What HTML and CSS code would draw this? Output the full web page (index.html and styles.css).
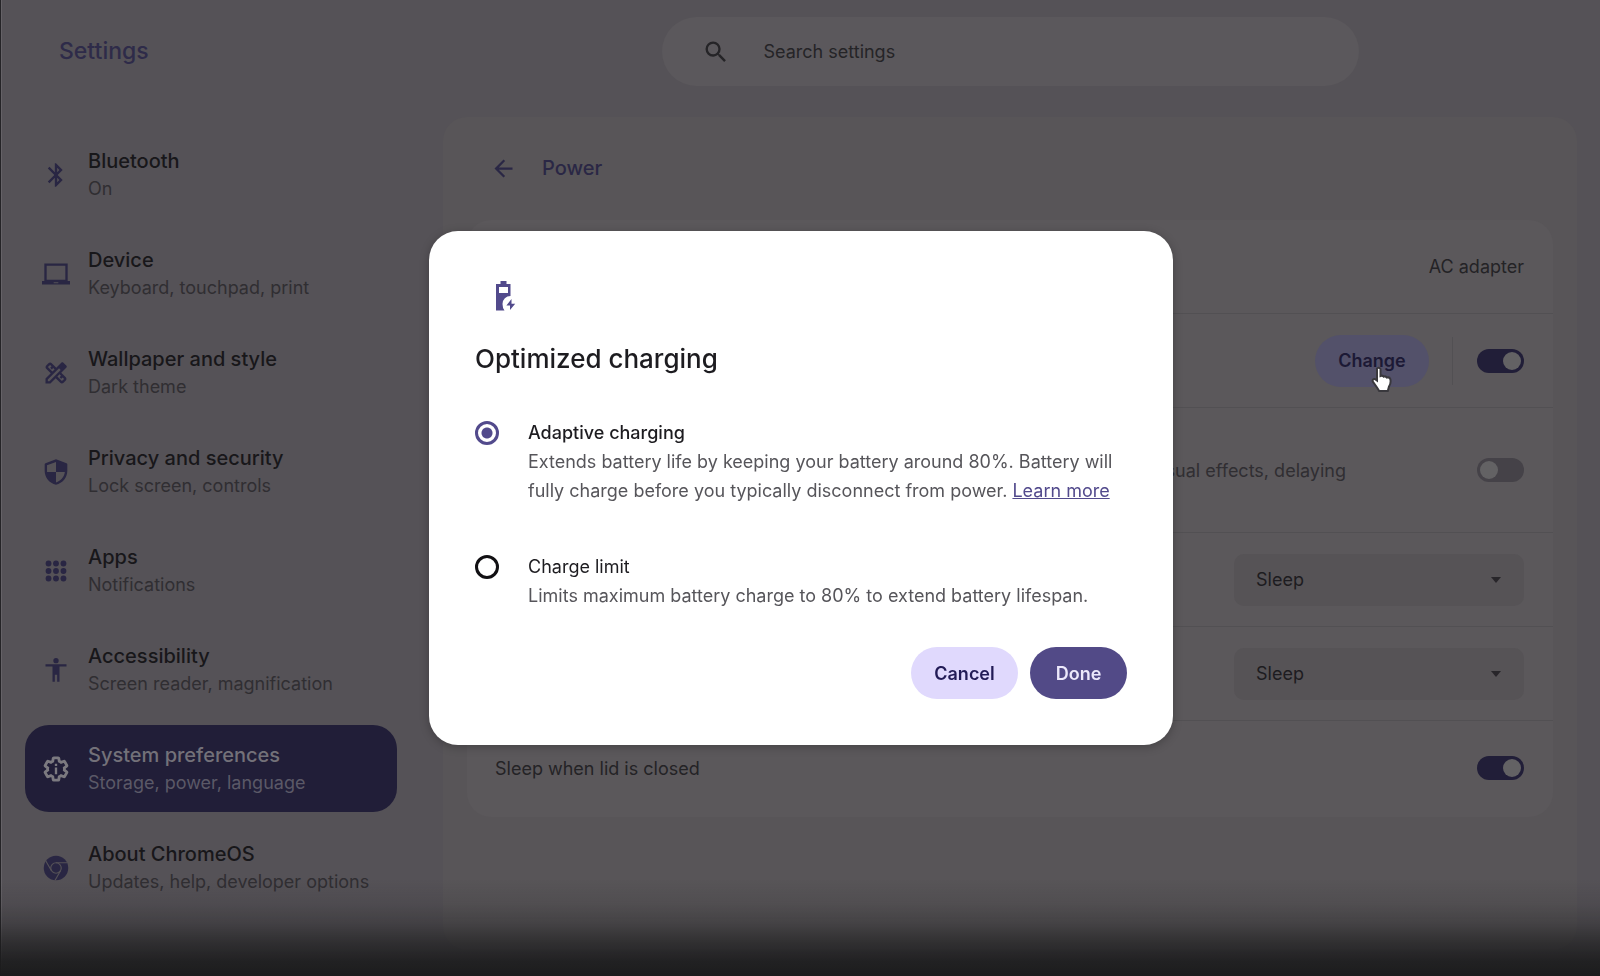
FILE: index.html
```
<!DOCTYPE html>
<html lang="en">
<head>
    <meta charset="UTF-8">
    <meta name="viewport" content="width=device-width, initial-scale=1.0">
    <title>Settings - Power</title>
    <link rel="stylesheet" href="styles.css">
</head>
<body>
    <header class="top-bar">
        <h1>Settings</h1>
        <label class="search">
            <svg viewBox="0 0 24 24"><path d="M15.5 14h-.79l-.28-.27A6.47 6.47 0 0 0 16 9.5 6.5 6.5 0 1 0 9.5 16c1.61 0 3.09-.59 4.23-1.57l.27.28v.79l5 4.99L20.49 19l-4.99-5zm-6 0a4.5 4.5 0 1 1 0-9 4.5 4.5 0 0 1 0 9z"/></svg>
            <input type="text" placeholder="Search settings" aria-label="Search settings">
        </label>
    </header>

    <div class="layout">
        <nav class="menu">
            <a href="#" class="menu-item">
                <svg viewBox="0 0 24 24"><path d="M17.71 7.71L12 2h-1v7.59L6.41 5 5 6.41 10.59 12 5 17.59 6.41 19 11 14.41V22h1l5.71-5.71-4.3-4.29 4.3-4.29zM13 5.83l1.88 1.88L13 9.59V5.83zm1.88 10.46L13 18.17v-3.76l1.88 1.88z"/></svg>
                <span><b>Bluetooth</b><small>On</small></span>
            </a>
            <a href="#" class="menu-item">
                <svg viewBox="0 0 24 24"><path fill-rule="evenodd" d="M2 3h20v15h2v3H0v-3h2zM4 5v12h16V5zM10 19v1h4v-1z"/></svg>
                <span><b>Device</b><small>Keyboard, touchpad, print</small></span>
            </a>
            <a href="#" class="menu-item">
                <svg viewBox="0 0 24 24"><path fill-rule="evenodd" d="M20.97 7.27c.39-.39.39-1.02 0-1.41l-2.83-2.83c-.39-.39-1.02-.39-1.41 0l-4.49 4.49-3.89-3.89c-.78-.78-2.05-.78-2.83 0l-1.9 1.9c-.78.78-.78 2.05 0 2.83l3.89 3.89L3 16.76V21h4.24l4.52-4.52 3.89 3.89c.95.95 2.23.6 2.83 0l1.9-1.9c.78-.78.78-2.05 0-2.83l-3.89-3.89 4.48-4.48zM5.04 6.94l1.89-1.9L8.2 6.31 7.02 7.5l1.41 1.41 1.19-1.19 1.2 1.2-1.9 1.9-3.88-3.88zM17.06 18.96l-3.89-3.89 1.9-1.9 1.2 1.21-1.19 1.19 1.41 1.41 1.19-1.19 1.27 1.27-1.89 1.9zM6.41 19H5v-1.41l9.61-9.61 1.41 1.41L6.41 19z"/></svg>
                <span><b>Wallpaper and style</b><small>Dark theme</small></span>
            </a>
            <a href="#" class="menu-item">
                <svg viewBox="0 0 24 24"><path fill-rule="evenodd" d="M12 1l-9 3.4q-.7.3-.7 1V11c0 5.6 4 10.7 9.7 12 5.7-1.3 9.7-6.4 9.7-12V5.4q0-.7-.7-1zM12 3.5V12h7.6c-.5 4.1-3.5 7.7-7.6 8.9V12H4.3V6.3z"/></svg>
                <span><b>Privacy and security</b><small>Lock screen, controls</small></span>
            </a>
            <a href="#" class="menu-item">
                <svg viewBox="0 0 24 24"><circle cx="5.6" cy="5.6" r="2.5"/><circle cx="12" cy="5.6" r="2.5"/><circle cx="18.4" cy="5.6" r="2.5"/><circle cx="5.6" cy="12" r="2.5"/><circle cx="12" cy="12" r="2.5"/><circle cx="18.4" cy="12" r="2.5"/><circle cx="5.6" cy="18.4" r="2.5"/><circle cx="12" cy="18.4" r="2.5"/><circle cx="18.4" cy="18.4" r="2.5"/></svg>
                <span><b>Apps</b><small>Notifications</small></span>
            </a>
            <a href="#" class="menu-item">
                <svg viewBox="0 0 24 24"><circle cx="12" cy="4" r="2.3"/><path d="M21 9h-6v13h-2v-6h-2v6H9V9H3V7h18v2z"/></svg>
                <span><b>Accessibility</b><small>Screen reader, magnification</small></span>
            </a>
            <a href="#" class="menu-item selected">
                <svg viewBox="0 0 24 24"><path fill="none" stroke="currentColor" stroke-width="2.4" d="M19.14 12.94c.04-.3.06-.61.06-.94 0-.32-.02-.64-.07-.94l2.03-1.58c.18-.14.23-.41.12-.61l-1.92-3.32c-.12-.22-.37-.29-.59-.22l-2.39.96c-.5-.38-1.03-.7-1.62-.94l-.36-2.54c-.04-.24-.24-.41-.48-.41h-3.84c-.24 0-.43.17-.47.41l-.36 2.54c-.59.24-1.13.57-1.62.94l-2.39-.96c-.22-.08-.47 0-.59.22L2.74 8.87c-.12.21-.08.47.12.61l2.03 1.58c-.05.3-.09.63-.09.94s.02.64.07.94l-2.03 1.58c-.18.14-.23.41-.12.61l1.92 3.32c.12.22.37.29.59.22l2.39-.96c.5.38 1.03.7 1.62.94l.36 2.54c.05.24.24.41.48.41h3.84c.24 0 .44-.17.47-.41l.36-2.54c.59-.24 1.13-.56 1.62-.94l2.39.96c.22.08.47 0 .59-.22l1.92-3.32c.12-.22.07-.47-.12-.61z"/><path d="M11 7.5h2v2h-2zM11 10.8h2v5.7h-2z"/></svg>
                <span><b>System preferences</b><small>Storage, power, language</small></span>
            </a>
            <a href="#" class="menu-item">
                <svg viewBox="0 0 24 24"><circle cx="12" cy="12" r="10.5"/><g class="chrome-lines"><circle cx="12" cy="12" r="4.5"/><path d="M12 7.5h9.5M8.1 14.3L3.3 6M15.9 14.3L11.2 22.5"/></g></svg>
                <span><b>About ChromeOS</b><small>Updates, help, developer options</small></span>
            </a>
        </nav>

        <main class="panel">
            <div class="panel-title">
                <button class="back" aria-label="Back">
                    <svg viewBox="0 0 24 24"><path d="M20 11H7.83l5.59-5.59L12 4l-8 8 8 8 1.41-1.41L7.83 13H20v-2z"/></svg>
                </button>
                <h2>Power</h2>
            </div>
            <div class="card">
                <div class="row"><span class="value">AC adapter</span></div>
                <div class="row">
                    <div class="change-box">
                        <button class="btn change">Change</button>
                        <!-- mouse pointer over the button -->
                        <svg class="pointer" viewBox="0 0 24 28"><path d="M7 2.5q2-1.5 3.5.5v7q2-1 3.2.7 2-.9 3.2.9 2.6-.8 3.4 1.5 1 4-1.3 7.4l-1.2 4.5H9.2L7 21.5l-4.2-6q-.8-2.7 2-2.5l2.2 1.5z"/></svg>
                    </div>
                    <span class="separator"></span>
                    <input type="checkbox" class="toggle" aria-label="Optimized charging" checked>
                </div>
                <div class="row tall">
                    <span class="description">visual effects, delaying</span>
                    <input type="checkbox" class="toggle" aria-label="Battery Saver">
                </div>
                <div class="row">
                    <select aria-label="While charging and idle"><option>Sleep</option></select>
                </div>
                <div class="row">
                    <select aria-label="While on battery and idle"><option>Sleep</option></select>
                </div>
                <div class="row">
                    <label class="row-label" for="lid">Sleep when lid is closed</label>
                    <input type="checkbox" class="toggle" id="lid" checked>
                </div>
            </div>
        </main>
    </div>
    <div class="fade"></div>

    <dialog class="modal" open aria-labelledby="modal-title">
        <svg class="battery" viewBox="0 0 20 30"><path fill-rule="evenodd" d="M4.5 0h6v3h4v12A8 8 0 0 0 6.5 23q0 4 2 6.500H0V3h4.500zM3 6v6h9V6z"/><path d="M15.500 18v4.700h3.700L14 29v-4.600h-3.600z"/></svg>
        <h2 id="modal-title">Optimized charging</h2>
        <form>
            <div class="option">
                <input type="radio" name="charging" id="adaptive" checked>
                <div>
                    <label for="adaptive" class="chosen">Adaptive charging</label>
                    <p>Extends battery life by keeping your battery around 80%. Battery will<br> fully charge before you typically disconnect from power. <a href="#">Learn more</a></p>
                </div>
            </div>
            <div class="option">
                <input type="radio" name="charging" id="limit">
                <div>
                    <label for="limit">Charge limit</label>
                    <p>Limits maximum battery charge to 80% to extend battery lifespan.</p>
                </div>
            </div>
            <div class="actions">
                <button type="button" class="btn cancel">Cancel</button>
                <button type="button" class="btn done">Done</button>
            </div>
        </form>
    </dialog>
</body>
</html>
```
FILE: styles.css
```
* {
    box-sizing: border-box;
}
body {
    margin: 0;
    min-height: 100vh;
    display: flex;
    flex-direction: column;
    background-color: #555257;
    border-left: 1px solid #252427;
    box-shadow: inset 1px 0 #656267;
    font-family: Inter, Roboto, sans-serif;
    font-size: 18px;
    line-height: 29px;
    color: #18171a;
}
h1, h2, p {
    margin: 0;
    font-weight: 500;
}
svg {
    fill: currentColor;
    flex: none;
}
input, select, button {
    font: inherit;
    color: inherit;
}

/* Top bar */
.top-bar {
    display: grid;
    grid-template-columns: 442px 1fr;
    align-items: center;
    padding: 17px 23px 31px 0;
}
.top-bar h1 {
    padding-left: 58px;
    font-size: 23px;
    color: #2e2b49;
}
.search {
    display: flex;
    align-items: center;
    gap: 34px;
    justify-self: center;
    width: 100%;
    max-width: 697px;
    height: 69px;
    padding: 0 40px;
    border-radius: 35px;
    background-color: #5b585c;
    color: #252427;
}
.search svg {
    width: 28px;
    height: 28px;
}
.search input {
    flex: 1;
    padding: 0;
    border: none;
    outline: none;
    background: none;
}
.search input::placeholder {
    color: #252427;
    opacity: 1;
}

.layout {
    flex: 1;
    display: flex;
}

/* Side menu */
.menu {
    width: 442px;
    flex: none;
    display: flex;
    flex-direction: column;
    gap: 12px;
    padding: 14px 46px 14px 24px;
}
.menu-item {
    display: flex;
    align-items: center;
    gap: 18px;
    height: 87px;
    padding: 0 17px;
    border-radius: 24px;
    color: #292643;
    line-height: 28px;
    text-decoration: none;
    white-space: nowrap;
}
.menu-item svg {
    width: 28px;
    height: 28px;
}
.menu-item b {
    display: block;
    font-size: 20px;
    font-weight: 500;
    color: #18171a;
}
.menu-item small {
    display: block;
    font-size: 18px;
    color: #302e32;
}
.menu-item.selected {
    background-color: #211e38;
    color: #7c7a80;
}
.selected b {
    color: #737179;
}
.selected small {
    color: #5b5967;
}
.chrome-lines {
    fill: none;
    stroke: #555257;
    stroke-width: 1;
}

/* Power page */
.panel {
    flex: 1;
    margin: 0 23px 26px 0;
    padding: 0 24px 24px;
    border-radius: 24px;
    background-color: #585558;
}
.panel-title {
    display: flex;
    align-items: center;
    gap: 25px;
    height: 103px;
    padding-left: 23px;
    color: #2a2745;
}
.panel-title h2 {
    font-size: 20px;
}
.back {
    display: flex;
    padding: 0;
    border: none;
    background: none;
}
.back svg {
    width: 27px;
    height: 27px;
}
.card {
    padding-bottom: 2px;
    border-radius: 24px;
    background-color: #5b585b;
}
.row {
    display: flex;
    align-items: center;
    justify-content: flex-end;
    height: 94px;
    padding: 0 29px 0 28px;
    border-bottom: 1px solid #525053;
}
.row:last-child {
    border-bottom: none;
}
.row.tall {
    height: 125px;
}
.value {
    color: #242326;
}
.row-label {
    margin-right: auto;
    color: #242326;
}
.description {
    margin-right: 131px;
    color: #302e32;
}
.separator {
    width: 1px;
    height: 48px;
    margin: 0 24px 0 23px;
    background-color: #525053;
}
.toggle {
    appearance: none;
    flex: none;
    display: flex;
    align-items: center;
    width: 47px;
    height: 24px;
    margin: 0;
    padding: 0 3px;
    border-radius: 12px;
    background-color: #454248;
}
.toggle::before {
    content: "";
    width: 18px;
    height: 18px;
    border-radius: 50%;
    background-color: #636264;
}
.toggle:checked {
    justify-content: flex-end;
    background-color: #211e38;
}
select {
    appearance: none;
    width: 290px;
    height: 52px;
    padding: 0 22px;
    border: none;
    border-radius: 10px;
    background-color: #565356;
    color: #1d1c20;
}
/* arrow of the drop-down */
.row:has(select)::after {
    content: "";
    width: 0;
    margin: 0 23px 0 -33px;
    border: 5px solid transparent;
    border-top: 6px solid #28262a;
    border-bottom: none;
    pointer-events: none;
    z-index: 1;
}

/* Buttons */
.btn {
    height: 52px;
    padding: 0 22px;
    border: none;
    border-radius: 26px;
    font-weight: 600;
}
.change-box {
    position: relative;
}
.change {
    width: 114px;
    background-color: #53516a;
    color: #1c1935;
}
.pointer {
    position: absolute;
    left: 55px;
    top: 31px;
    width: 24px;
    height: 28px;
    fill: #fff;
    stroke: #39383d;
    stroke-width: 2;
}

/* Dark shade along the bottom of the screen */
.fade {
    position: fixed;
    left: 0;
    right: 0;
    bottom: 0;
    height: 96px;
    background: linear-gradient(rgba(28, 28, 29, 0), rgba(28, 28, 29, 0.12) 25%, rgba(28, 28, 29, 0.32) 45%, rgba(28, 28, 29, 0.65) 65%, rgba(28, 28, 29, 0.9) 85%, #1c1c1d);
    pointer-events: none;
}

/* Dialog */
.modal {
    position: fixed;
    inset: 0 0 0 2px;
    width: 744px;
    max-width: 94%;
    margin: auto;
    padding: 50px 46px 46px;
    border: none;
    border-radius: 29px;
    background-color: #fff;
    color: #1d1c20;
    box-shadow: 0 2px 10px rgba(0, 0, 0, 0.25);
}
.battery {
    display: block;
    width: 20px;
    height: 30px;
    margin-left: 21px;
    color: #524a8c;
}
.modal h2 {
    margin: 33px 0 45px;
    font-size: 26px;
}
.option {
    display: flex;
    gap: 29px;
    margin-bottom: 47px;
}
.option:nth-child(2) {
    margin-bottom: 37px;
}
.option p {
    font-weight: 400;
    color: #56555a;
}
.option a {
    color: #524a8c;
}
.option label {
    display: block;
}
.option .chosen {
    font-weight: 500;
}
.option input {
    appearance: none;
    flex: none;
    width: 24px;
    height: 24px;
    margin: 3px 0;
    border: 3px solid #111013;
    border-radius: 50%;
}
.option input:checked {
    border-color: #524a8c;
    background: radial-gradient(#524a8c 5px, #fff 6px);
}
.actions {
    display: flex;
    justify-content: flex-end;
    gap: 12px;
}
.cancel {
    min-width: 107px;
    background-color: #e0d9fd;
    color: #221b56;
}
.done {
    min-width: 97px;
    background-color: #524a87;
    color: #ece8fb;
}
```
